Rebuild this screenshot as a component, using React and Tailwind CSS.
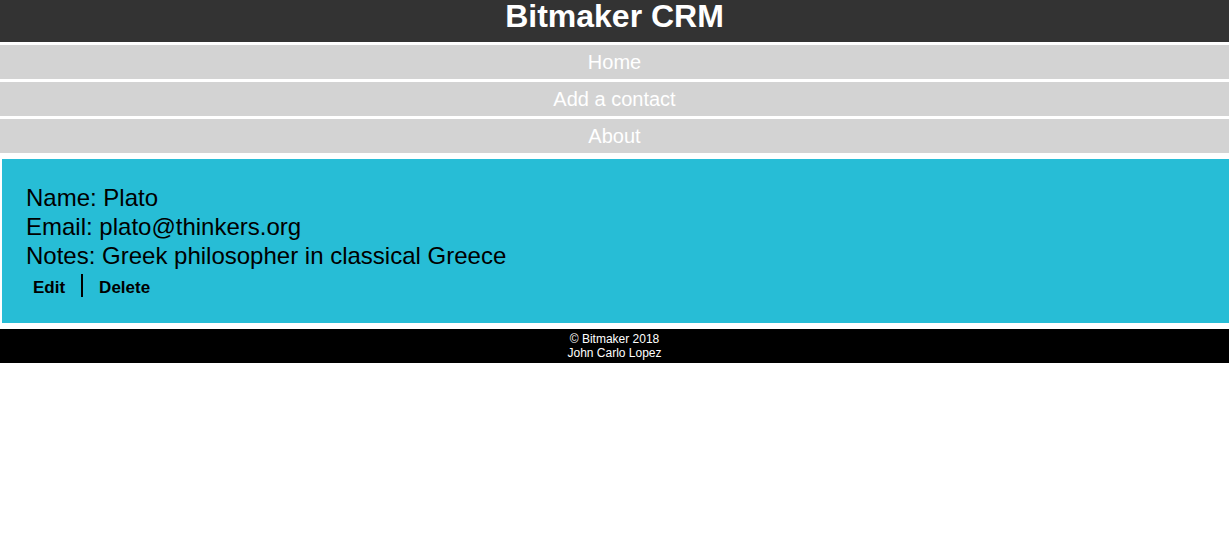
export default function App() {
  const links = ["Home", "Add a contact", "About"];

  return (
    <div className="min-h-screen bg-white font-['Liberation_Sans',Arial,Helvetica,sans-serif] text-black">
      {/* Header */}
      <header className="h-[42px] bg-[#333333] text-white text-center">
        <h1 className="text-[32px] leading-[32px] font-bold">Bitmaker CRM</h1>
      </header>

      {/* Nav */}
      <nav className="mt-[3px] flex flex-col gap-[3px]">
        {links.map((l) => (
          <a
            key={l}
            href="#"
            className="block h-[34px] bg-[#d3d3d3] text-white text-center text-[20px] leading-[34px]"
          >
            {l}
          </a>
        ))}
      </nav>

      {/* Contact */}
      <main className="mt-[6px] ml-[2px] bg-[#27bdd6] pt-[24px] pb-[26px] px-[24px]">
        <div className="text-[24px] leading-[29px]">
          <p>Name: Plato</p>
          <p>Email: plato@thinkers.org</p>
          <p>Notes: Greek philosopher in classical Greece</p>
        </div>
        <div className="mt-[4px] h-[23px] flex items-center text-[17px] leading-[17px] font-bold">
          <a href="#" className="ml-[7px] mt-[3px]">Edit</a>
          <span className="mx-[16px] w-[2px] h-[23px] bg-black"></span>
          <a href="#" className="mt-[3px]">Delete</a>
        </div>
      </main>

      {/* Footer */}
      <footer className="mt-[6px] h-[34px] bg-black text-white text-center text-[12px] leading-[14px] py-[3px]">
        <p>© Bitmaker 2018</p>
        <p>John Carlo Lopez</p>
      </footer>
    </div>
  );
}
